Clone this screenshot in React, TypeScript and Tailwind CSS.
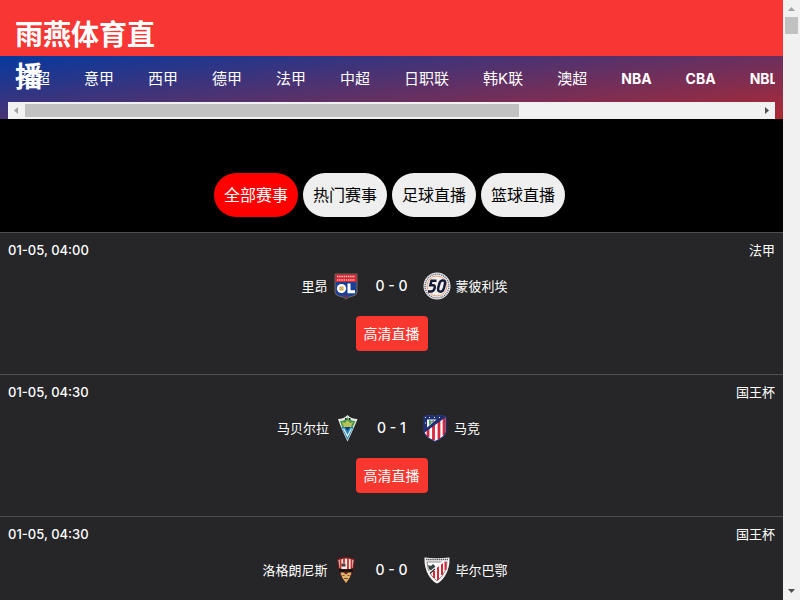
import type { ReactNode } from "react";

const leagues = ["英超", "意甲", "西甲", "德甲", "法甲", "中超", "日职联", "韩K联", "澳超", "NBA", "CBA", "NBL"];
const filters = ["全部赛事", "热门赛事", "足球直播", "篮球直播"];

function Lyon() {
  return (
    <svg viewBox="0 0 30 30" className="size-[30px]" aria-hidden="true">
      <path d="M4 3H26V21Q26 24 22 25Q17 26 15 28Q13 26 8 25Q4 24 4 21Z" fill="#1b3f94" stroke="#8f7752" strokeWidth="0.8" />
      <path d="M4.5 3.5H25.5V11H4.5Z" fill="#e0242c" />
      <path d="M6 5.5H24M6 9H24" stroke="#f6c9c9" strokeWidth="1.6" strokeDasharray="1.4 0.8" />
      <circle cx="10.5" cy="17.5" r="4.6" fill="#fff" />
      <circle cx="10.5" cy="17.5" r="2.6" fill="#e3c887" />
      <path d="M9 16l3 3M12 16l-3 3" stroke="#b08a4a" strokeWidth="0.7" />
      <path d="M18 12.5V20.8H24" fill="none" stroke="#fff" strokeWidth="3" />
      <path d="M12 24.5H18L15 27Z" fill="#7b2f4a" />
    </svg>
  );
}

function Montpellier() {
  return (
    <svg viewBox="0 0 30 30" className="size-[30px]" aria-hidden="true">
      <circle cx="15" cy="15" r="13.5" fill="#f4efe9" />
      <circle cx="15" cy="15" r="11.9" fill="none" stroke="#59668a" strokeWidth="1.4" strokeDasharray="1.1 0.9" />
      <circle cx="15" cy="15" r="10" fill="none" stroke="#d98353" strokeWidth="0.7" />
      <g fill="none" stroke="#141c3d" strokeWidth="2.5">
        <path d="M14.5 9.8H9.5L8.3 14.3H11Q13.5 14.3 12.6 17.3Q11.8 20.5 9 20.5H6" />
        <path d="M19.8 9.6Q24 8.8 22.9 13.3L22 17Q20.9 21 18.1 20.6Q15.3 20.3 16.3 16.5L17.3 12.8Q18 10 19.8 9.6Z" />
      </g>
    </svg>
  );
}

function Marbella() {
  return (
    <svg viewBox="0 0 30 30" className="size-[30px]" aria-hidden="true">
      <path d="M5 6Q11 6 14.5 2Q18 6 24.5 6Q21 15 14.5 28.5Q8 15 5 6Z" fill="#e9efe7" />
      <path d="M7 8Q12 8 14.5 4Q17 8 22.5 8L19.5 15H9.5Z" fill="#4d9651" />
      <path d="M12 5h1.5v2H12zM16 5h1.5v2H16z" fill="#1d3140" />
      <path d="M9 9l3 1 2.5-3L17 10l3-1-2 5H11Z" fill="#b5c455" />
      <path d="M8.5 14H20.5L14.5 27Z" fill="#2384b5" />
      <path d="M10.5 15.5L14.5 23L18.5 15.5" fill="none" stroke="#d9ecf4" strokeWidth="1.3" />
      <path d="M12 14l2.5 4L17 14Z" fill="#173c76" />
    </svg>
  );
}

function Atletico() {
  return (
    <svg viewBox="0 0 30 30" className="size-[30px]" aria-hidden="true">
      <path d="M4 4Q10 1.5 15 3.5Q20 1.5 26 4V19Q25 24 15 28.5Q5 24 4 19Z" fill="#fff" />
      <path d="M8 14v10M13.5 10v17M19 5v21M24 4v18" stroke="#d9263e" strokeWidth="2.8" />
      <path d="M4 4Q10 1.5 15 3.5Q20 1.5 26 4L4 20Z" fill="#202e70" />
      <path d="M7 6.5H16.500L7 14.500Z" fill="#eef3f5" />
      <path d="M9 7l3 1-1 3-2 1Z" fill="#4b9b61" />
      <path d="M12 8l2-1-1 3Z" fill="#38435e" />
      <path d="M5 4.500h1M5 10h1M9 4.500h1M14 4.500h1M19 4.500h1" stroke="#fff" strokeWidth="1" />
      <path d="M4 4Q10 1.5 15 3.5Q20 1.5 26 4V19Q25 24 15 28.5Q5 24 4 19Z" fill="none" stroke="#253579" strokeWidth="1.2" />
    </svg>
  );
}

function Logrones() {
  return (
    <svg viewBox="0 0 30 30" className="size-[30px]" aria-hidden="true">
      <path d="M6 4Q15 0 24 4L23 15Q21 17 21 20L15 28.500L9 20Q9 17 7 15Z" fill="#6b1c20" />
      <path d="M7.500 5Q15 2 22.500 5L21.500 14H8.500Z" fill="#f4e9e6" />
      <path d="M9.500 4v10M13 3v5M17 3v11M20.500 4v10" stroke="#c4302b" strokeWidth="1.800" />
      <path d="M10.500 8.500h4v3h-4z" fill="#4e3537" />
      <path d="M7.500 13Q15 16 22.500 13L21.500 18Q15 15 8.500 18Z" fill="#171214" />
      <path d="M9.500 17.500h3l2.500 2 2.500-2h3L18.500 23l-3.500 5-3.500-5Z" fill="#d9b86b" />
      <path d="M11.500 20.500h2M16.500 20.500h2M13 23.500h4" stroke="#8d3d2b" strokeWidth="1" />
    </svg>
  );
}

function Bilbao() {
  return (
    <svg viewBox="0 0 30 30" className="size-[30px]" aria-hidden="true">
      <path d="M2.500 2.500Q15 4 27.500 2.500Q28 13 23 21Q19 27 15 28.500Q11 27 7 21Q2 13 2.500 2.500Z" fill="#f4f4f4" />
      <path d="M4 4.500H26" stroke="#59595d" strokeWidth="1.300" strokeDasharray="1.500 0.600" />
      <path d="M5 7H25Q25 15 20 21L15 26L10 21Q5 15 5 7Z" fill="#fff" stroke="#45353a" strokeWidth="0.600" />
      <path d="M12 16v7M16 11v14M20 8v12M23.500 7v8" stroke="#d72836" strokeWidth="2" />
      <path d="M6 10l3 1 2-2 2 2 1 2-5 3-2-2Z" fill="#34443c" />
      <path d="M7 18L22 6" stroke="#fff" strokeWidth="1.800" />
      <path d="M8 18.500L13 14" stroke="#2c2528" strokeWidth="1.200" />
    </svg>
  );
}

type Match = { time: string; league: string; home: string; away: string; score: string; homeLogo: ReactNode; awayLogo: ReactNode };

const matches: Match[] = [
  { time: "01-05, 04:00", league: "法甲", home: "里昂", away: "蒙彼利埃", score: "0 - 0", homeLogo: <Lyon />, awayLogo: <Montpellier /> },
  { time: "01-05, 04:30", league: "国王杯", home: "马贝尔拉", away: "马竞", score: "0 - 1", homeLogo: <Marbella />, awayLogo: <Atletico /> },
  { time: "01-05, 04:30", league: "国王杯", home: "洛格朗尼斯", away: "毕尔巴鄂", score: "0 - 0", homeLogo: <Logrones />, awayLogo: <Bilbao /> },
];

function MatchRow({ match }: { match: Match }) {
  return (
    <li className="h-[142px] border-t border-[#4d4d4f] bg-[#262628] px-2 pt-[7px] text-[13px] leading-5">
      <div className="flex justify-between">
        <time className="font-medium">{match.time}</time>
        <span>{match.league}</span>
      </div>
      <div className="mt-[11px] grid grid-cols-[1fr_auto_1fr] items-center">
        <div className="flex items-center justify-end gap-1">
          <span>{match.home}</span>
          {match.homeLogo}
        </div>
        <span className="px-[14px] text-sm font-medium">{match.score}</span>
        <div className="flex items-center gap-1">
          {match.awayLogo}
          <span>{match.away}</span>
        </div>
      </div>
      <div className="mt-[15px] flex justify-center">
        <a href="#live" className="rounded bg-[#f8372f] px-2 py-[7px] text-sm leading-[21px]">高清直播</a>
      </div>
    </li>
  );
}

function Arrow({ d, fill }: { d: string; fill: string }) {
  return (
    <svg viewBox="0 0 17 17" className="size-[17px] shrink-0" aria-hidden="true">
      <path d={d} fill={fill} />
    </svg>
  );
}

export default function App() {
  return (
    <div className="flex h-screen overflow-hidden bg-black font-[Inter,'Noto_Sans_CJK_SC',sans-serif] text-white">
      <div className="min-w-0 flex-1 overflow-hidden">
        <header className="relative z-10 h-14 bg-[#f83634] px-[15px] pt-[14px]">
          <h1 className="w-[150px] text-[28px] leading-[42px] font-bold">雨燕体育直播</h1>
        </header>
        <nav className="bg-[linear-gradient(173deg,#06399f,#ae2933)] px-2">
          <div className="flex h-[46px] items-center gap-[34px] overflow-hidden pl-3 whitespace-nowrap">
            {leagues.map((name) => (
              <a
                key={name}
                href="#league"
                className={`shrink-0 ${/^[A-Z]+$/.test(name) ? "text-sm font-bold" : "text-[15px]"}`}
              >
                {name}
              </a>
            ))}
          </div>
          <div className="flex h-[17px] items-center bg-[#f1f1f1]">
            <Arrow d="M10 5V12L6 8.5Z" fill="#a3a3a3" />
            <div className="flex-1">
              <div className="h-[13px] w-[494px] max-w-full bg-[#c1c1c1]" />
            </div>
            <Arrow d="M7 5V12L11 8.5Z" fill="#505050" />
          </div>
        </nav>
        <main>
          <div className="flex justify-center gap-[5px] pt-[54px] pr-1 pb-[15px]">
            {filters.map((name, i) => (
              <button
                key={name}
                type="button"
                className={`h-11 rounded-full px-[10px] text-base ${i === 0 ? "bg-[#ff0000] text-white" : "bg-[#efefef] text-black"}`}
              >
                {name}
              </button>
            ))}
          </div>
          <ul>
            {matches.map((match) => (
              <MatchRow key={match.home} match={match} />
            ))}
          </ul>
        </main>
      </div>
      <div className="flex w-[17px] shrink-0 flex-col items-center bg-[#f1f1f1]">
        <Arrow d="M5 11H12L8.500 7Z" fill="#a3a3a3" />
        <div className="w-[13px] flex-1">
          <div className="h-[17px] bg-[#c1c1c1]" />
        </div>
        <Arrow d="M5 6H12L8.500 10Z" fill="#505050" />
      </div>
    </div>
  );
}
